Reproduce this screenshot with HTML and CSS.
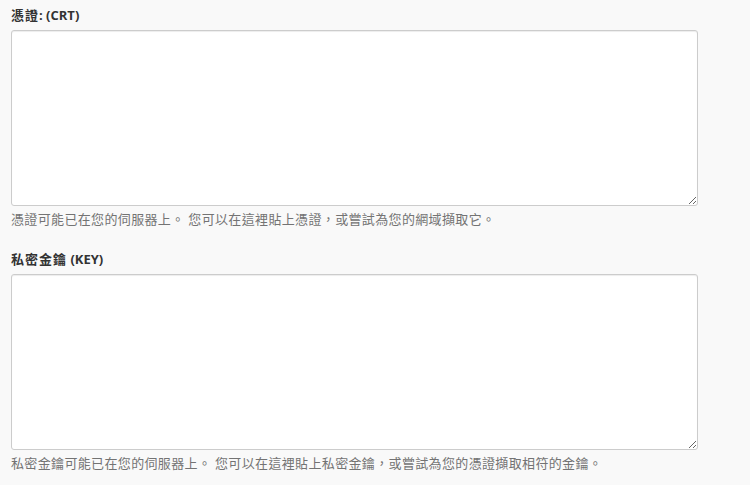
FILE: index.html
```html
<!DOCTYPE html>
<html lang="zh-Hant">
<head>
<meta charset="utf-8">
<link rel="stylesheet" href="styles.css">
</head>
<body>
<div class="form">
  <div class="group">
    <label class="label" for="crt"><span class="cjk">憑證</span>: (CRT)</label>
    <textarea id="crt" class="field"></textarea>
    <p class="help">憑證可能已在您的伺服器上。 您可以在這裡貼上憑證，或嘗試為您的網域擷取它。</p>
  </div>
  <div class="group">
    <label class="label" for="key"><span class="cjk">私密金鑰</span> (KEY)</label>
    <textarea id="key" class="field"></textarea>
    <p class="help">私密金鑰可能已在您的伺服器上。 您可以在這裡貼上私密金鑰，或嘗試為您的憑證擷取相符的金鑰。</p>
  </div>
</div>
</body>
</html>
```

FILE: styles.css
```css
html, body {
  margin: 0;
  padding: 0;
  background: #f9f9f9;
}
body {
  font-family: "Open Sans", "Noto Sans CJK TC", sans-serif;
  color: #333;
}
.form {
  padding: 6px 0 0 11px;
  width: 687px;
}
.group {
  display: flex;
  flex-direction: column;
  margin-bottom: 23px;
}
.label {
  font-size: 13px;
  font-weight: bold;
  line-height: 18px;
  margin-bottom: 6px;
}
.cjk {
  letter-spacing: 1px;
}
.field {
  box-sizing: border-box;
  width: 687px;
  height: 176px;
  margin: 0;
  border: 1px solid #ccc;
  border-radius: 3px;
  background: #fff;
  box-shadow: inset 0 1px 1px rgba(0,0,0,0.075);
  resize: vertical;
}
.help {
  margin: 5px 0 0;
  font-size: 13px;
  letter-spacing: 0.35px;
  line-height: 16px;
  color: #737373;
}
```
